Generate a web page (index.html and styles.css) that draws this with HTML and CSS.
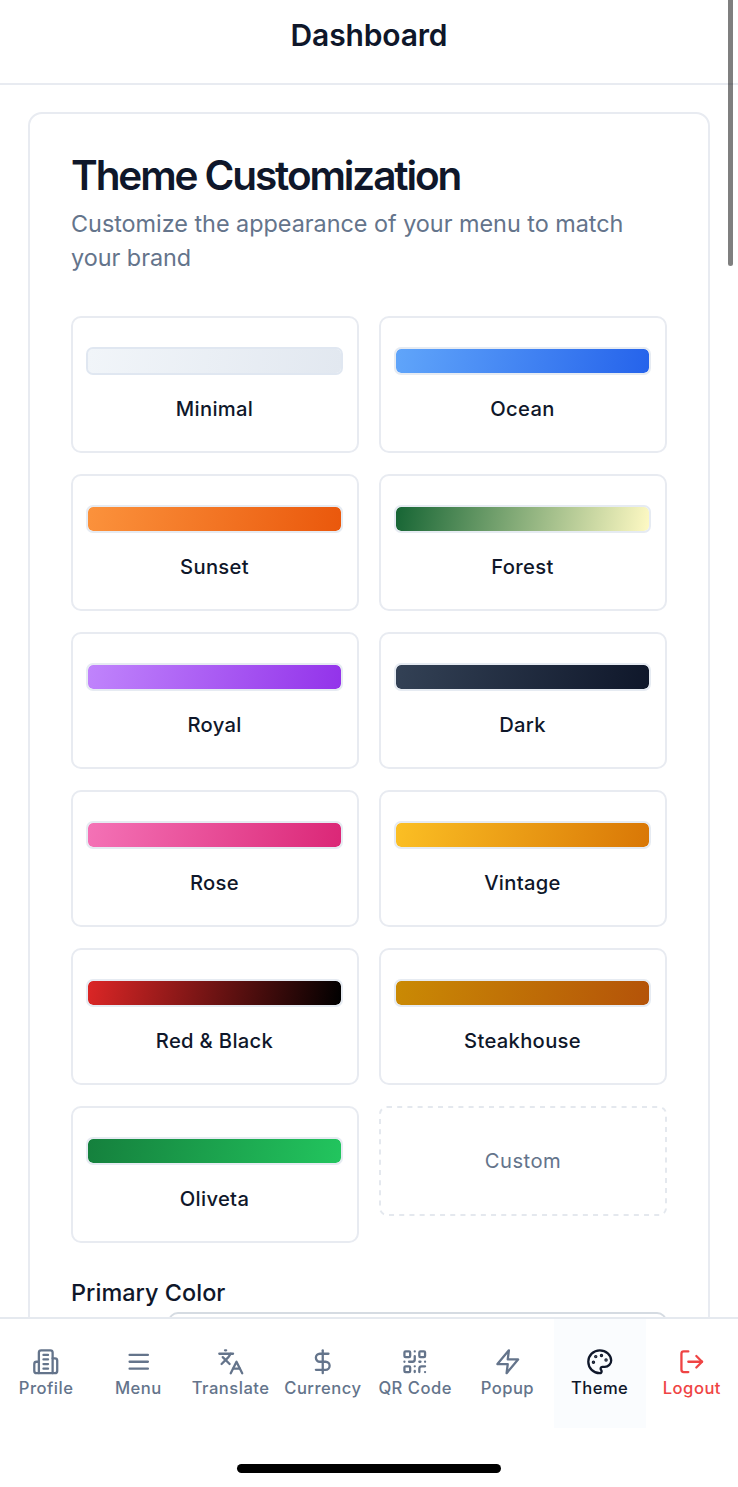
FILE: index.html
```html
<!DOCTYPE html>
<html lang="en">
<head>
<meta charset="utf-8">
<title>Dashboard</title>
<link rel="stylesheet" href="styles.css">
</head>
<body>
<div class="app">
  <header class="topbar"><h1 class="topbar-title">Dashboard</h1></header>
  <main class="content">
    <section class="card">
      <h2 class="card-title">Theme Customization</h2>
      <p class="card-desc">Customize the appearance of your menu to match<br>your brand</p>
      <div class="grid">
        <div class="theme"><div class="swatch minimal"></div><span class="label">Minimal</span></div>
        <div class="theme"><div class="swatch ocean"></div><span class="label">Ocean</span></div>
        <div class="theme"><div class="swatch sunset"></div><span class="label">Sunset</span></div>
        <div class="theme"><div class="swatch forest"></div><span class="label">Forest</span></div>
        <div class="theme"><div class="swatch royal"></div><span class="label">Royal</span></div>
        <div class="theme"><div class="swatch dark"></div><span class="label">Dark</span></div>
        <div class="theme"><div class="swatch rose"></div><span class="label">Rose</span></div>
        <div class="theme"><div class="swatch vintage"></div><span class="label">Vintage</span></div>
        <div class="theme"><div class="swatch redblack"></div><span class="label">Red &amp; Black</span></div>
        <div class="theme"><div class="swatch steak"></div><span class="label">Steakhouse</span></div>
        <div class="theme"><div class="swatch oliveta"></div><span class="label">Oliveta</span></div>
        <div class="custom"><svg class="dashes" width="288" height="110" viewBox="0 0 288 110"><rect x="1" y="1" width="286" height="108" rx="7"/></svg><span class="label muted">Custom</span></div>
      </div>
      <div class="field-label">Primary Color</div>
      <div class="field-row"><div class="field-input"></div></div>
    </section>
  </main>
  <nav class="tabs">
    <a class="tab"><svg class="icon" viewBox="0 0 24 24"><path d="M6 22V4a2 2 0 0 1 2-2h8a2 2 0 0 1 2 2v18Z"/><path d="M6 12H4a2 2 0 0 0-2 2v6a2 2 0 0 0 2 2h2"/><path d="M18 9h2a2 2 0 0 1 2 2v9a2 2 0 0 1-2 2h-2"/><path d="M10 6h4M10 10h4M10 14h4M10 18h4"/></svg><span class="tab-text">Profile</span></a>
    <a class="tab"><svg class="icon" viewBox="0 0 24 24"><path d="M4 6h16M4 12h16M4 18h16"/></svg><span class="tab-text">Menu</span></a>
    <a class="tab"><svg class="icon" viewBox="0 0 24 24"><path d="m5 8 6 6"/><path d="m4 14 6-6 2-3"/><path d="M2 5h12"/><path d="M7 2h1"/><path d="m22 22-5-10-5 10"/><path d="M14 18h6"/></svg><span class="tab-text">Translate</span></a>
    <a class="tab"><svg class="icon" viewBox="0 0 24 24"><path d="M12 2v20"/><path d="M17 5H9.5a3.5 3.5 0 0 0 0 7h5a3.5 3.5 0 0 1 0 7H6"/></svg><span class="tab-text">Currency</span></a>
    <a class="tab"><svg class="icon" viewBox="0 0 24 24"><rect width="5" height="5" x="3" y="3" rx="1"/><rect width="5" height="5" x="16" y="3" rx="1"/><rect width="5" height="5" x="3" y="16" rx="1"/><path d="M21 16h-3a2 2 0 0 0-2 2v3"/><path d="M21 21v.01"/><path d="M12 7v3a2 2 0 0 1-2 2H7"/><path d="M3 12h.01"/><path d="M12 3h.01"/><path d="M12 16v.01"/><path d="M16 12h1"/><path d="M21 12v.01"/><path d="M12 21v-1"/></svg><span class="tab-text">QR Code</span></a>
    <a class="tab"><svg class="icon" viewBox="0 0 24 24"><path d="M13 2 3 14h9l-1 8 10-12h-9l1-8z"/></svg><span class="tab-text">Popup</span></a>
    <a class="tab active"><svg class="icon" viewBox="0 0 24 24"><g fill="currentColor"><circle cx="13.5" cy="6.5" r=".5"/><circle cx="17.5" cy="10.5" r=".5"/><circle cx="8.5" cy="7.5" r=".5"/><circle cx="6.5" cy="12.5" r=".5"/></g><path d="M12 2C6.5 2 2 6.5 2 12s4.500 10 10 10c.926 0 1.648-.746 1.648-1.688 0-.437-.18-.835-.437-1.125-.29-.289-.438-.652-.438-1.125a1.640 1.640 0 0 1 1.668-1.668h1.996c3.051 0 5.555-2.503 5.555-5.554C21.965 6.012 17.461 2 12 2z"/></svg><span class="tab-text">Theme</span></a>
    <a class="tab danger"><svg class="icon" viewBox="0 0 24 24"><path d="M9 21H5a2 2 0 0 1-2-2V5a2 2 0 0 1 2-2h4"/><path d="m16 17 5-5-5-5"/><path d="M21 12H9"/></svg><span class="tab-text">Logout</span></a>
  </nav>
  <div class="home"></div>
  <div class="scroll-thumb"></div>
</div>
</body>
</html>
```
FILE: styles.css
```css
* { box-sizing: border-box; }
body { margin: 0; background: #fff; color: #0f172a; font-family: Inter, "Liberation Sans", sans-serif; }
.app { position: relative; width: 738px; height: 1487px; overflow: hidden; display: flex; flex-direction: column; background: #fff; }
.topbar { flex: none; height: 85px; border-bottom: 2px solid #e8ebf1; display: flex; justify-content: center; padding-top: 14px; }
.topbar-title { margin: 0; font-size: 30px; line-height: 43px; font-weight: 600; letter-spacing: -0.150px; }
.content { flex: none; height: 1232px; overflow: hidden; padding: 27px 28px 0; }
.card { height: 1400px; border: 2px solid #e8ebf1; border-radius: 14px; padding: 41px 41px 0; }
.card-title { margin: 0; font-size: 40.500px; line-height: 41px; font-weight: 600; letter-spacing: -2.100px; white-space: nowrap; }
.card-desc { margin: 11px 0 0; font-size: 23.400px; line-height: 34.400px; letter-spacing: -0.020px; color: #64748b; white-space: nowrap; }
.grid { margin-top: 40px; display: grid; grid-template-columns: 288px 288px; column-gap: 20px; row-gap: 21px; align-items: start; }
.theme { height: 137px; border: 2px solid #e8ebf1; border-radius: 10px; padding: 29px 14px 0 13px; text-align: center; }
.swatch { height: 28px; border: 2px solid #e6ebf2; border-radius: 7px; margin-bottom: 20px; background-clip: padding-box; }
.label { font-size: 20.200px; line-height: 28px; font-weight: 480; letter-spacing: 0.320px; display: block; }
.minimal { background-image: linear-gradient(100deg, #f1f5f9, #e2e8f0); border-color: #e0e7f1; }
.ocean { background-image: linear-gradient(100deg, #60a5fa, #2563eb); }
.sunset { background-image: linear-gradient(100deg, #fb923c, #ea580c); }
.forest { background-image: linear-gradient(100deg, #166534, #fef9c3); }
.royal { background-image: linear-gradient(100deg, #c084fc, #9333ea); }
.dark { background-image: linear-gradient(100deg, #334155, #0f172a); }
.rose { background-image: linear-gradient(100deg, #f472b6, #db2777); }
.vintage { background-image: linear-gradient(100deg, #fbbf24, #d97706); }
.redblack { background-image: linear-gradient(100deg, #dc2626, #000); }
.steak { background-image: linear-gradient(100deg, #ca8a04, #b45309); }
.oliveta { background-image: linear-gradient(100deg, #15803d, #22c55e); }
.custom { position: relative; height: 110px; display: flex; align-items: center; justify-content: center; }
.dashes { position: absolute; inset: 0; fill: none; stroke: #e4e8ee; stroke-width: 2; stroke-dasharray: 5 5.200; }
.muted { color: #64748b; font-weight: 400; letter-spacing: 0.500px; }
.field-label { margin-top: 35.500px; font-size: 23.400px; line-height: 30px; font-weight: 480; letter-spacing: 0.050px; }
.field-row { padding: 3.500px 0 0 97px; }
.field-input { height: 68px; border: 2px solid #d5dbe2; border-radius: 10px; }
.tabs { flex: none; height: 111px; border-top: 2px solid #e5e9ef; display: grid; grid-template-columns: repeat(8, 1fr); }
.tab { display: flex; flex-direction: column; align-items: center; padding-top: 28.500px; color: #64748b; }
.active { background: #fafcfe; color: #0f172a; }
.danger { color: #ef4444; }
.icon { width: 27.500px; height: 27.500px; flex: none; fill: none; stroke: currentColor; stroke-width: 2; stroke-linecap: round; stroke-linejoin: round; }
.tab-text { font-size: 16.600px; line-height: 26px; font-weight: 480; letter-spacing: 0.480px; white-space: nowrap; }
.home { align-self: center; flex: none; margin-top: 36px; width: 264px; height: 9px; border-radius: 5px; background: #000; }
.scroll-thumb { position: absolute; left: 727.500px; top: -10px; width: 5px; height: 276px; border-radius: 3px; background: rgba(0,0,0,.5); }
```
